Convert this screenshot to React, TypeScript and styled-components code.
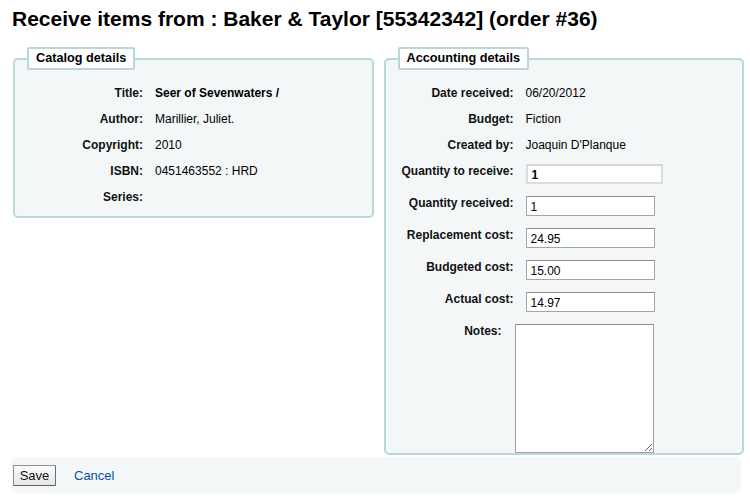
import React from "react";
import styled, { createGlobalStyle } from "styled-components";

const Global = createGlobalStyle`
  html, body { margin: 0; padding: 0; background: #fff; }
  body { font-family: "Liberation Sans", Arial, Helvetica, sans-serif; color: #000; }
  * { box-sizing: border-box; }
`;

const Page = styled.div`
  width: 750px;
  height: 496px;
  padding: 0 6px 0 12px;
  overflow: hidden;
`;

const Title = styled.h1`
  margin: 0;
  padding-top: 7px;
  height: 47px;
  font-size: 21px;
  line-height: 24px;
  font-weight: bold;
`;

const Columns = styled.div`
  display: flex;
  align-items: flex-start;
  gap: 10px;
  padding-left: 1px;
`;

const Fieldset = styled.fieldset<{ $bottom: number }>`
  margin: 0;
  width: 361px;
  border: 2px solid #b9d8d9;
  border-radius: 5px;
  background: #f3f7f8;
  padding: 10px 0 ${(p) => p.$bottom}px 12px;
  min-width: 0;
`;

const Legend = styled.legend`
  border: 2px solid #b9d8d9;
  border-radius: 2px;
  background: #fff;
  padding: 2px 7px 2px;
  font-size: 12.7px;
  line-height: 15px;
  font-weight: bold;
  margin-left: 0;
`;

const Rows = styled.ol`
  list-style: none;
  margin: 0;
  padding: 0;
`;

const Row = styled.li<{ $last?: boolean }>`
  display: flex;
  align-items: flex-start;
  padding: 6px 0 ${(p) => (p.$last ? 0 : 6)}px;
  font-size: 12px;
  line-height: 14px;
`;

const Label = styled.span<{ $narrow?: boolean }>`
  flex: none;
  width: ${(p) => (p.$narrow ? 104 : 116)}px;
  margin-right: ${(p) => (p.$narrow ? 13 : 12)}px;
  text-align: right;
  font-weight: bold;
  color: #111;
  white-space: nowrap;
`;

const Value = styled.span<{ $bold?: boolean }>`
  font-weight: ${(p) => (p.$bold ? "bold" : "normal")};
  white-space: nowrap;
`;

const TextInput = styled.input<{ $wide?: boolean }>`
  margin: 0;
  width: ${(p) => (p.$wide ? 137 : 129)}px;
  height: 20px;
  padding: 1px 4px 0;
  font-family: "Liberation Sans", Arial, sans-serif;
  font-size: 12px;
  font-weight: ${(p) => (p.$wide ? "bold" : "normal")};
  color: #000;
  background: #fff;
  border: ${(p) => (p.$wide ? "2px solid #dcdcdc" : "1px solid #a5a5a5")};
  border-top-color: ${(p) => (p.$wide ? "#d4d4d4" : "#8e8e8e")};
  border-radius: 0;
  outline: none;
`;

const NotesArea = styled.textarea`
  margin: 0;
  display: block;
  width: 139px;
  height: 129px;
  border: 1px solid #a0a0a0;
  border-top-color: #8a8a8a;
  background: #fff;
  resize: both;
  font-family: "Liberation Sans", Arial, sans-serif;
  font-size: 12px;
`;

const Footer = styled.div`
  margin-top: 2px;
  width: 729px;
  height: 36px;
  background: #f3f7f8;
  border-radius: 5px;
  display: flex;
  align-items: center;
  gap: 18px;
  padding-left: 1px;
  padding-top: 1px;
`;

const SaveButton = styled.button`
  width: 43px;
  height: 21px;
  padding: 0;
  font-family: "Liberation Sans", Arial, sans-serif;
  font-size: 13px;
  color: #111;
  background: linear-gradient(#fbfbfb, #e6e6e6);
  border: 1px solid #8f8f8f;
  border-right-color: #6f6f6f;
  border-bottom-color: #5f5f5f;
  border-radius: 1px;
`;

const CancelLink = styled.a`
  font-size: 13px;
  color: #0b4fa5;
  text-decoration: none;
`;

const catalog: [string, string, boolean?][] = [
  ["Title:", "Seer of Sevenwaters /", true],
  ["Author:", "Marillier, Juliet."],
  ["Copyright:", "2010"],
  ["ISBN:", "0451463552 : HRD"],
  ["Series:", ""],
];

const accountingText: [string, string][] = [
  ["Date received:", "06/20/2012"],
  ["Budget:", "Fiction"],
  ["Created by:", "Joaquin D'Planque"],
];

const accountingInputs: [string, string][] = [
  ["Quantity received:", "1"],
  ["Replacement cost:", "24.95"],
  ["Budgeted cost:", "15.00"],
  ["Actual cost:", "14.97"],
];

export default function App() {
  return (
    <Page>
      <Global />
      <Title>Receive items from : Baker &amp; Taylor [55342342] (order #36)</Title>
      <Columns>
        <Fieldset $bottom={6}>
          <Legend>Catalog details</Legend>
          <Rows>
            {catalog.map(([l, v, b]) => (
              <Row key={l}>
                <Label>{l}</Label>
                <Value $bold={b}>{v}</Value>
              </Row>
            ))}
          </Rows>
        </Fieldset>
        <Fieldset $bottom={0}>
          <Legend>Accounting details</Legend>
          <Rows>
            {accountingText.map(([l, v]) => (
              <Row key={l}>
                <Label>{l}</Label>
                <Value>{v}</Value>
              </Row>
            ))}
            <Row>
              <Label>Quantity to receive:</Label>
              <TextInput $wide defaultValue="1" />
            </Row>
            {accountingInputs.map(([l, v]) => (
              <Row key={l}>
                <Label>{l}</Label>
                <TextInput defaultValue={v} />
              </Row>
            ))}
            <Row $last>
              <Label $narrow>Notes:</Label>
              <NotesArea />
            </Row>
          </Rows>
        </Fieldset>
      </Columns>
      <Footer>
        <SaveButton>Save</SaveButton>
        <CancelLink href="#">Cancel</CancelLink>
      </Footer>
    </Page>
  );
}
